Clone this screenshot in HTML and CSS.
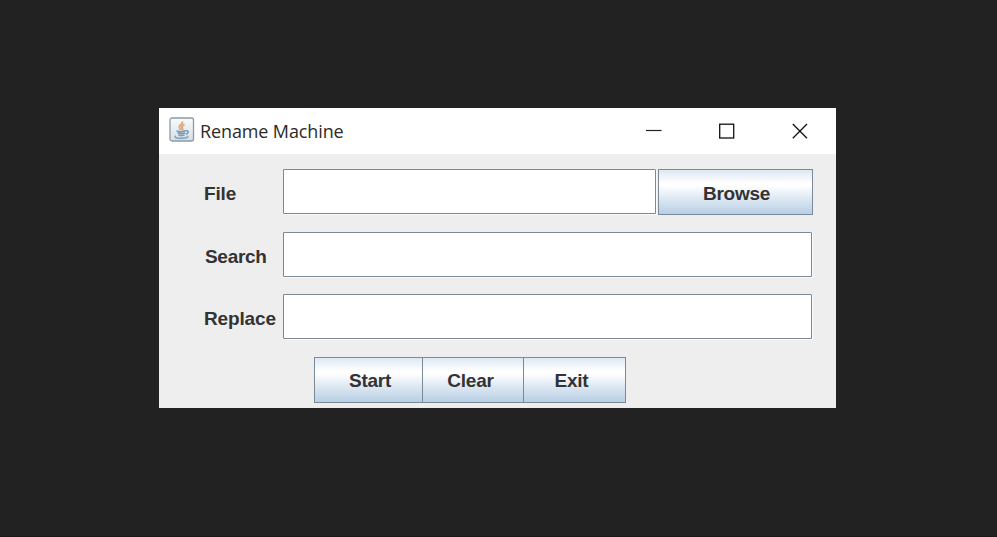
FILE: index.html
```
<!DOCTYPE html>
<html lang="en">
<head>
<meta charset="utf-8">
<title>Rename Machine</title>
<link rel="stylesheet" href="styles.css">
</head>
<body>
<main class="window">
  <header class="titlebar">
    <svg class="app-icon" width="26" height="26" viewBox="0 0 26 26" fill="none">
      <defs>
        <linearGradient id="tile" x1="0" y1="0" x2="0" y2="1"><stop stop-color="#fafbfc"/><stop offset="1" stop-color="#d3dfe8"/></linearGradient>
      </defs>
      <rect x="1" y="1" width="23.5" height="23" rx="2" fill="url(#tile)" stroke="#8e9ba6" stroke-width="1.3"/>
      <path d="M13.4 4.5C14.2 7.5 9.2 8 10.4 10.5C10.8 11.5 11.7 12 11.8 13M15.5 7.5C13 8.5 12.2 10 13.4 11.3C13.9 12 13.5 12.7 13 13" stroke="#e3a976" stroke-width="2"/>
      <path d="M7.5 13.7C10 14.7 14.5 14.6 17 13.6M8.5 15.8C11 16.8 14 16.8 16.2 15.8M9.3 17.9C11.6 18.8 14 18.7 15.6 17.9M17.2 14C20.3 13.2 19.6 16.5 16.8 17.2" stroke="#7f9cb5" stroke-width="1.6"/>
      <path d="M7 18.9C4 20.3 8.5 21.5 12.8 21.3C17 21.1 20 20.2 18.3 19.1" stroke="#86a1b9" stroke-width="1.5"/>
    </svg>
    <h1 class="title">Rename Machine</h1>
    <div class="controls">
      <svg width="16" height="16" viewBox="0 0 16 16"><path d="M0 7.5H15.5" stroke="#222" stroke-width="1.2"/></svg>
      <svg width="16" height="16" viewBox="0 0 16 16"><rect x=".7" y="1.2" width="14" height="13.8" fill="none" stroke="#111" stroke-width="1.3"/></svg>
      <svg width="16" height="16" viewBox="0 0 16 16"><path d="M.8 1L15 15.2M15 1L.8 15.2" stroke="#111" stroke-width="1.3"/></svg>
    </div>
  </header>
  <form class="form">
    <div class="row">
      <label class="label" for="file">File</label>
      <input class="field" id="file" type="text">
      <button class="button browse" type="button">Browse</button>
    </div>
    <div class="row">
      <label class="label search" for="search">Search</label>
      <input class="field wide" id="search" type="text">
    </div>
    <div class="row">
      <label class="label" for="replace">Replace</label>
      <input class="field wide" id="replace" type="text">
    </div>
    <div class="actions">
      <button class="button start" type="button">Start</button>
      <button class="button clear" type="button">Clear</button>
      <button class="button exit" type="button">Exit</button>
    </div>
  </form>
</main>
</body>
</html>
```
FILE: styles.css
```
* { box-sizing: border-box; }
body {
  margin: 0;
  height: 537px;
  padding: 108px 0 0 159px;
  background: #222;
  border-bottom: 1px solid #1d191b;
  font-family: "Liberation Sans", Arial, sans-serif;
  overflow: hidden;
}
.window {
  width: 677px;
  height: 299.5px;
  background: #eee;
}
.titlebar {
  display: flex;
  align-items: center;
  height: 46px;
  padding: 0 28px 0 10px;
  background: #fff;
}
.app-icon { margin-top: -2px; }
.title {
  margin: 0 0 0 5px;
  font: 400 19px/24px "Open Sans", "Noto Sans", sans-serif;
  letter-spacing: -0.1px;
  color: #2a2a2a;
  white-space: nowrap;
  transform: scaleX(.945);
  transform-origin: left;
}
.controls {
  display: flex;
  gap: 57px;
  margin: -1px 0 0 auto;
}
.controls svg { display: block; }
.form { padding: 15px 23px 0 45px; }
.row {
  display: flex;
  height: 46px;
  margin-bottom: 16.5px;
}
.label {
  width: 79px;
  flex: none;
  font-weight: 700;
  font-size: 19px;
  line-height: 49px;
  letter-spacing: -0.15px;
  color: #333;
}
.search { padding-left: 1px; letter-spacing: -0.3px; }
.field {
  flex: 1;
  min-width: 0;
  height: 45px;
  margin-right: 2px;
  border: 1px solid #7a8a99;
  border-radius: 0 1px 0 1px;
  background: #fff;
  box-shadow: 1px 1px #fafafa;
  outline: none;
}
.wide { margin-right: 1px; }
.button {
  height: 46px;
  padding: 3px 0 0;
  border: 1px solid #7a8a99;
  background: linear-gradient(#dde8f3 0%, #fff 30%, #fff 36%, #dce7f2 66%, #b8cfe5 100%);
  color: #333;
  font: 700 19px/22px "Liberation Sans", Arial, sans-serif;
  letter-spacing: -0.25px;
}
.browse { width: 155px; padding-left: 2px; }
.actions {
  display: flex;
  margin-left: 110px;
}
.start { width: 109px; padding-left: 3px; }
.clear { width: 102px; margin-left: -1px; padding-right: 5px; }
.exit { width: 103px; margin-left: -1px; padding-right: 6px; }
```
